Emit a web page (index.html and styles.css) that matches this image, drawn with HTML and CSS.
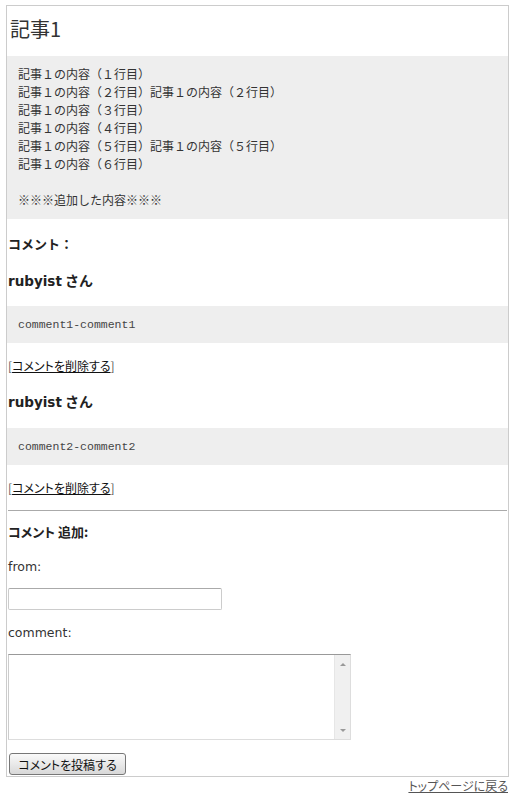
FILE: index.html
```html
<!DOCTYPE html>
<html lang="ja">
<head>
<meta charset="utf-8">
<title>記事1</title>
<link rel="stylesheet" href="styles.css">
</head>
<body>
<div class="page">
  <h1 class="title">記事1</h1>
  <div class="content">記事１の内容（１行目）<br>記事１の内容（２行目）記事１の内容（２行目）<br>記事１の内容（３行目）<br>記事１の内容（４行目）<br>記事１の内容（５行目）記事１の内容（５行目）<br>記事１の内容（６行目）<br><br>※※※追加した内容※※※</div>
  <h3 class="comments-head">コメント：</h3>
  <div class="comment">
    <h4 class="author"><span class="latin">rubyist</span> さん</h4>
    <pre class="body">comment1-comment1</pre>
    <p class="del">[<a href="#">コメントを削除する</a>]</p>
  </div>
  <div class="comment">
    <h4 class="author"><span class="latin">rubyist</span> さん</h4>
    <pre class="body">comment2-comment2</pre>
    <p class="del">[<a href="#">コメントを削除する</a>]</p>
  </div>
  <hr class="rule">
  <form class="form">
    <h3 class="add-head">コメント 追加:</h3>
    <label class="lbl" for="from">from:</label>
    <input class="from" id="from" type="text">
    <label class="lbl" for="comment">comment:</label>
    <div class="textbox">
      <textarea class="text" id="comment"></textarea>
      <div class="sb"><span class="arrow up"></span><span class="arrow down"></span></div>
    </div>
    <button class="submit" type="button">コメントを投稿する</button>
  </form>
</div>
<div class="back"><a href="#">トップページに戻る</a></div>
</body>
</html>
```
FILE: styles.css
```css
html, body {
  margin: 0;
  padding: 0;
  background: #fff;
}
body {
  padding: 5px 0 0 6px;
  font-family: "DejaVu Sans", "Noto Sans CJK JP", sans-serif;
  color: #333;
  font-size: 12px;
}
.page {
  width: 500px;
  border: 1px solid #ccc;
  padding: 0 0 0 1px;
}
.title {
  margin: 0;
  padding: 11px 2px 15px;
  font-family: "Noto Sans CJK JP", sans-serif;
  font-size: 20px;
  line-height: 24px;
  font-weight: normal;
  color: #333;
}
.content {
  margin: 0 0 0 -1px;
  background: #eee;
  padding: 9px 11px 10px;
  font-family: "Noto Sans CJK JP", sans-serif;
  font-size: 12px;
  line-height: 18px;
  color: #333;
}
.comments-head {
  margin: 16px 0 0;
  height: 18px;
  font-size: 13px;
  line-height: 18px;
  font-weight: bold;
  font-family: "Noto Sans CJK JP", sans-serif;
  color: #222;
}
.author {
  margin: 17px 0 0;
  height: 18px;
  font-size: 14px;
  line-height: 18px;
  font-weight: bold;
  font-family: "Noto Sans CJK JP", sans-serif;
  color: #222;
}
.comments-head + .comment .author {
  margin-top: 18px;
}
.author .latin {
  font-family: "DejaVu Sans", sans-serif;
  font-size: 13.5px;
}
.body {
  margin: 17px 0 0 -1px;
  height: 15px;
  background: #eee;
  padding: 11px 11px;
  font-family: "Liberation Mono", monospace;
  font-size: 11.5px;
  line-height: 15px;
  color: #444;
}
.comment + .comment .body {
  margin-top: 18px;
}
.del {
  margin: 14px 0 0;
  height: 18px;
  font-family: "Noto Sans CJK JP", sans-serif;
  font-feature-settings: "palt";
  font-size: 12px;
  line-height: 18px;
  color: #555;
}
.del a {
  color: #111;
  text-decoration: underline;
}
.rule {
  margin: 13px 1px 0 0;
  border: 0;
  border-top: 1px solid #aaa;
  height: 0;
}
.form {
  display: flex;
  flex-direction: column;
  align-items: flex-start;
}
.add-head {
  margin: 12px 0 0;
  height: 18px;
  font-size: 13px;
  line-height: 18px;
  font-weight: bold;
  font-family: "Noto Sans CJK JP", sans-serif;
  font-feature-settings: "palt";
  color: #222;
}
.lbl {
  margin-top: 17px;
  height: 18px;
  font-family: "DejaVu Sans", sans-serif;
  font-size: 12.5px;
  line-height: 18px;
  color: #333;
}
.from {
  margin: 12px 0 0;
  width: 214px;
  height: 22px;
  box-sizing: border-box;
  border: 1px solid #ccc;
  border-top-color: #aaa;
  border-radius: 2px;
  padding: 0 2px;
  background: #fff;
}
.from + .lbl {
  margin-top: 14px;
}
.textbox {
  margin-top: 12px;
  width: 343px;
  height: 86px;
  box-sizing: border-box;
  border: 1px solid #ddd;
  border-top-color: #999;
  border-left-color: #ccc;
  display: flex;
  background: #fff;
}
.text {
  flex: 1;
  border: 0;
  margin: 0;
  padding: 2px;
  resize: none;
  overflow: hidden;
  background: #fff;
  outline: none;
}
.sb {
  width: 15px;
  background: #f0f0f0;
  border-left: 1px solid #e6e6e6;
  display: flex;
  flex-direction: column;
  justify-content: space-between;
  align-items: center;
  padding: 8px 0 7px;
}
.arrow {
  width: 0;
  height: 0;
  border-left: 3px solid transparent;
  border-right: 3px solid transparent;
}
.arrow.up {
  border-bottom: 3px solid #999;
}
.arrow.down {
  border-top: 3px solid #999;
}
.submit {
  margin: 13px 0 1px 1px;
  width: 117px;
  height: 22px;
  box-sizing: border-box;
  padding: 0;
  border: 1px solid #777;
  border-radius: 3px;
  background: linear-gradient(#fafafa, #d8d8d8);
  font-family: "Noto Sans CJK JP", sans-serif;
  font-feature-settings: "palt";
  font-size: 12px;
  color: #111;
}
.back {
  width: 502px;
  text-align: right;
  margin-top: 1px;
  font-family: "Noto Sans CJK JP", sans-serif;
  font-feature-settings: "palt";
  font-size: 12px;
  line-height: 16px;
}
.back a {
  color: #555;
  text-decoration: underline;
}
```
